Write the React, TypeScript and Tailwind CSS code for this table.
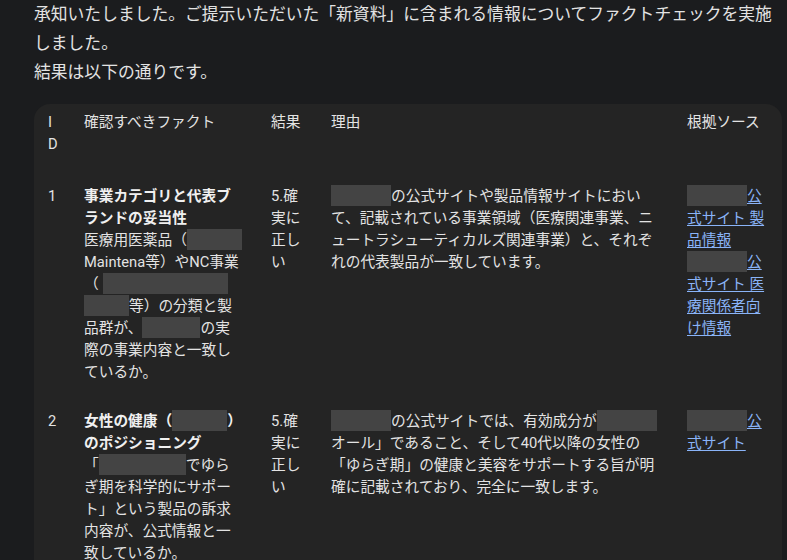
import React from 'react';

const Redact = ({ w, ml }: { w: string; ml?: string }) => (
  <span className={`inline-block h-[21px] align-top bg-[#444444] ${w} ${ml ?? ''}`} />
);

const Th = ({ children, extra }: { children: React.ReactNode; extra?: string }) => (
  <th className={`pt-[7px] pb-[15px] pl-[14px] pr-[14px] text-left align-top font-normal ${extra ?? ''}`}>
    {children}
  </th>
);

const Td = ({ children }: { children: React.ReactNode }) => (
  <td className="pt-[15px] pb-[12px] pl-[14px] pr-[14px] align-top">{children}</td>
);

const SourceLink = ({ label }: { label: string }) => (
  <span className="block">
    <Redact w="w-[60px]" />
    <a href="#" className="text-[#8ab4f8] underline underline-offset-2">
      {label}
    </a>
  </span>
);

export default function App() {
  return (
    <div
      className="min-h-screen bg-[#1b1c1e] text-[#e3e3e3] overflow-hidden"
      style={{ fontFamily: "Roboto, 'Noto Sans CJK JP', sans-serif" }}
    >
      <div className="pl-[34px] pr-[5px]">
        {/* Intro */}
        <p className="text-[16.8px] leading-[29px]">
          承知いたしました。ご提示いただいた「新資料」に含まれる情報についてファクトチェックを実施しました。
          <br />
          結果は以下の通りです。
        </p>

        {/* Fact check table */}
        <div className="mt-[17px] rounded-2xl bg-[#242424] text-[14.7px] leading-[22px]">
          <table className="w-full table-fixed border-collapse">
            <colgroup>
              <col className="w-[36px]" />
              <col className="w-[187px]" />
              <col className="w-[60px]" />
              <col className="w-[356px]" />
              <col />
            </colgroup>
            <thead>
              <tr>
                <Th extra="break-all">ID</Th>
                <Th>確認すべきファクト</Th>
                <Th>結果</Th>
                <Th>理由</Th>
                <Th>根拠ソース</Th>
              </tr>
            </thead>
            <tbody>
              <tr>
                <Td>1</Td>
                <Td>
                  <strong className="font-bold text-[#f0f0f0]">事業カテゴリと代表ブランドの妥当性</strong>
                  <br />
                  医療用医薬品（<Redact w="w-[55px]" />Maintena等）やNC事業（<Redact w="w-[125px]" ml="ml-[4px]" />
                  <Redact w="w-[45px]" />等）の分類と製品群が、<Redact w="w-[58px]" />の実際の事業内容と一致しているか。
                </Td>
                <Td>5.確実に正しい</Td>
                <Td>
                  <Redact w="w-[60px]" />
                  の公式サイトや製品情報サイトにおいて、記載されている事業領域（医療関連事業、ニュートラシューティカルズ関連事業）と、それぞれの代表製品が一致しています。
                </Td>
                <Td>
                  <SourceLink label="公式サイト 製品情報" />
                  <SourceLink label="公式サイト 医療関係者向け情報" />
                </Td>
              </tr>
              <tr>
                <Td>2</Td>
                <Td>
                  <strong className="font-bold text-[#f0f0f0]">
                    女性の健康（<Redact w="w-[55px]" />）のポジショニング
                  </strong>
                  <br />
                  「<Redact w="w-[87px]" />でゆらぎ期を科学的にサポート」という製品の訴求内容が、公式情報と一致しているか。
                </Td>
                <Td>5.確実に正しい</Td>
                <Td>
                  <Redact w="w-[60px]" />
                  の公式サイトでは、有効成分が<Redact w="w-[60px]" />
                  オール」であること、そして40代以降の女性の「ゆらぎ期」の健康と美容をサポートする旨が明確に記載されており、完全に一致します。
                </Td>
                <Td>
                  <SourceLink label="公式サイト" />
                </Td>
              </tr>
            </tbody>
          </table>
        </div>
      </div>
    </div>
  );
}
